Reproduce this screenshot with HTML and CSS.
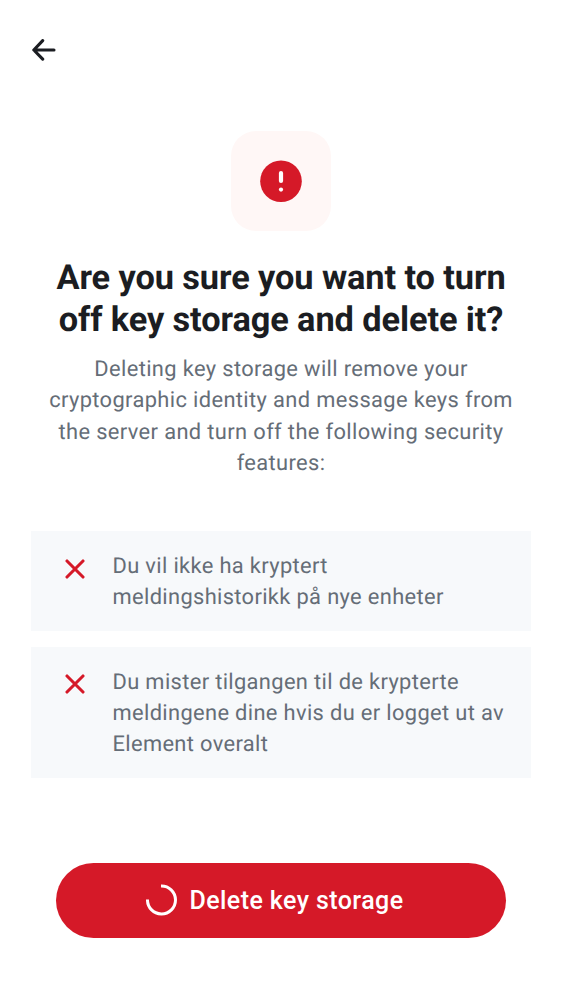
FILE: index.html
```html
<!DOCTYPE html>
<html lang="en">
<head>
<meta charset="utf-8">
<title>Delete key storage</title>
<link rel="stylesheet" href="styles.css">
</head>
<body>
<main class="screen">
  <header class="topbar">
    <svg class="back" viewBox="0 0 24 22" fill="none" stroke="#1b1d22" stroke-width="3.1" stroke-linecap="round" stroke-linejoin="round"><path d="M10.7 1.6 1.8 11l8.9 9.2M2 11h20"/></svg>
  </header>
  <section class="intro">
    <div class="hero">
      <svg class="alert" viewBox="0 0 42 42"><circle cx="21" cy="21.2" r="20.8" fill="#d51928"/><path d="M21 13v8" stroke="#fff" stroke-width="4.2" stroke-linecap="round"/><circle cx="21" cy="29.6" r="2.1" fill="#fff"/></svg>
    </div>
    <h1 class="title">Are you sure you want to turn<br>off key storage and delete it?</h1>
    <p class="subtitle">Deleting key storage will remove your<br>cryptographic identity and message keys from<br>the server and turn off the following security<br>features:</p>
  </section>
  <ul class="list">
    <li class="item">
      <svg class="cross" viewBox="0 0 20 20"><path d="m2 2 16 16M18 2 2 18"/></svg>
      <span>Du vil ikke ha kryptert<br>meldingshistorikk på nye enheter</span>
    </li>
    <li class="item">
      <svg class="cross" viewBox="0 0 20 20"><path d="m2 2 16 16M18 2 2 18"/></svg>
      <span>Du mister tilgangen til de krypterte<br>meldingene dine hvis du er logget ut av<br>Element overalt</span>
    </li>
  </ul>
  <button class="delete">
    <svg class="spinner" viewBox="0 0 32 32"><path d="M15 2A14 14 0 1 1 1.5 15.5"/></svg>
    <span class="label">Delete key storage</span>
  </button>
</main>
</body>
</html>
```
FILE: styles.css
```css
* { box-sizing: border-box; }
body { margin: 0; background: #fff; font-family: Roboto, sans-serif; text-rendering: geometricPrecision; }
.screen { height: 1000px; display: flex; flex-direction: column; padding: 0 31px; }
.topbar { height: 131px; padding-top: 39px; }
.back { display: block; width: 24px; height: 22px; margin-left: 1px; }
.intro { display: flex; flex-direction: column; align-items: center; }
.hero { width: 100px; height: 100px; border-radius: 25px; background: #fff7f6; display: flex; align-items: center; justify-content: center; }
.alert { width: 42px; height: 42px; }
.title { margin: 26px 0 0; font-size: 34.375px; line-height: 42px; font-weight: 700; letter-spacing: -0.1px; color: #1b1d22; text-align: center; white-space: nowrap; }
.subtitle { margin: 13.1px 0 0; font-size: 21.875px; line-height: 31.25px; letter-spacing: 0.37px; color: #656d77; text-align: center; white-space: nowrap; }
.list { list-style: none; margin: 51.9px 0 0; padding: 0; display: flex; flex-direction: column; gap: 16px; }
.item { display: flex; gap: 27.5px; padding: 19.9px 0 17.6px 34px; background: #f7f9fb; color: #656d77; font-size: 21.875px; line-height: 31.2px; letter-spacing: 0.35px; white-space: nowrap; }
.cross { width: 20px; height: 20px; margin-top: 7.7px; flex: none; fill: none; stroke: #d51928; stroke-width: 3.1; stroke-linecap: round; }
.delete { margin: 84.9px 25px 0; height: 75px; flex: none; border: 0; border-radius: 38px; padding: 0 13px 0 0; background: #d51928; color: #fff; font: 500 25px/38px Roboto, sans-serif; letter-spacing: 0.42px; display: flex; align-items: center; justify-content: center; gap: 12px; }
.spinner { width: 32px; height: 32px; fill: none; stroke: #fff; stroke-width: 3; }
.label { padding-top: 1px; }
```
